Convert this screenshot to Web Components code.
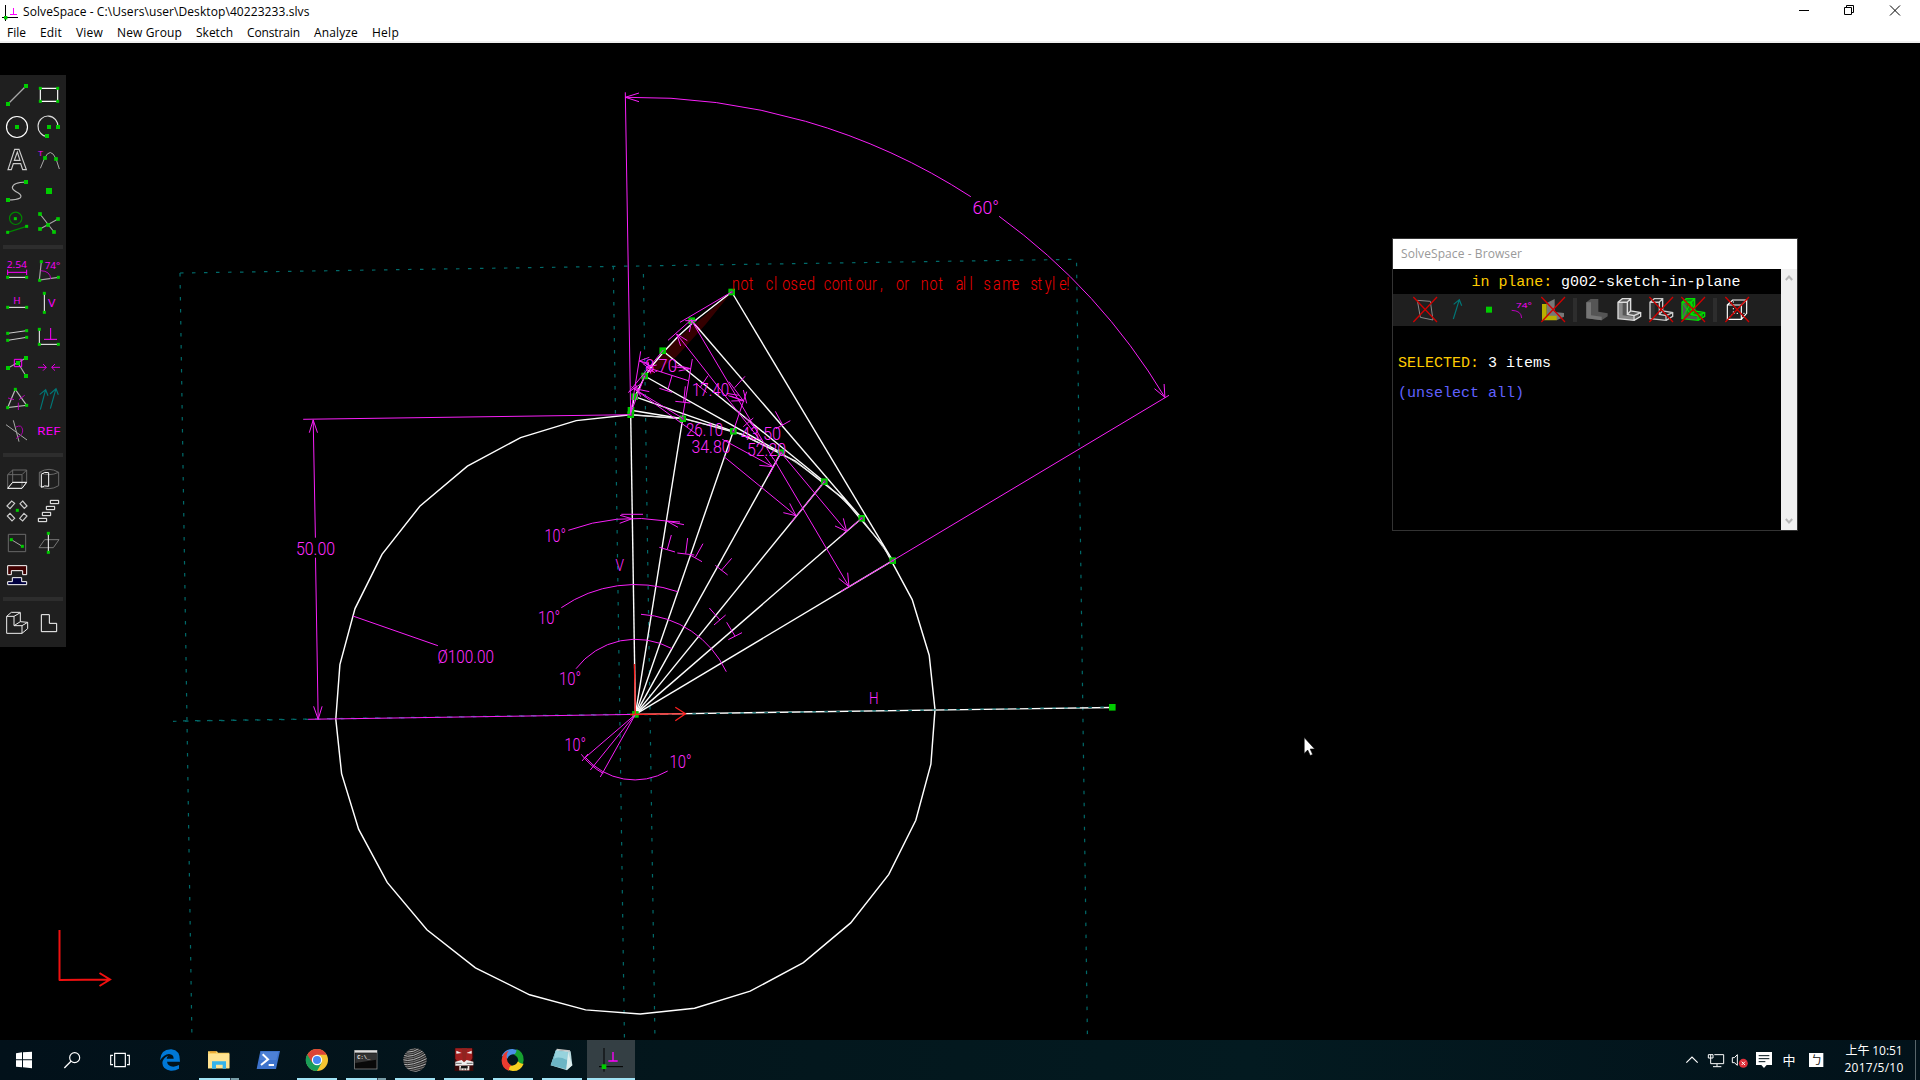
<!DOCTYPE html>
<html lang="zh-Hant">
<head>
<meta charset="utf-8">
<title>SolveSpace</title>
<style>
html,body{margin:0;height:100%;background:#000;overflow:hidden}
body{font-family:"Open Sans","Noto Sans CJK TC",sans-serif}
</style>
</head>
<body>
<solve-app></solve-app>
<script>
const define=(name,css,html,after)=>customElements.define(name,class extends HTMLElement{
  connectedCallback(){
    if(this.shadowRoot)return;
    const r=this.attachShadow({mode:'open'});
    r.innerHTML=`<style>${css}</style>${typeof html==='function'?html(this):html}`;
    if(after)after(this,r);
  }
});
const svg=(vb,w,h,body)=>`<svg viewBox="${vb}" width="${w}" height="${h}">${body}</svg>`;
const ln=(d,c='#fff',w=1,x='')=>`<path d="${d}" fill="none" stroke="${c}" stroke-width="${w}" ${x}/>`;

/* Text whose tracking is adjusted to a given width */
define('fit-text',':host{display:block;white-space:pre}span{display:inline-block}','<span><slot></slot></span>',(el,r)=>{
  const w=+el.getAttribute('w'),s=r.querySelector('span');
  if(w){const m=s.getBoundingClientRect().width,n=el.textContent.length;
    s.style.letterSpacing=((w-m)/n)+'px';}
});

/* ---------- title and menu bars ---------- */
define('title-bar',`:host{display:flex;align-items:center;height:23px;background:#fff;color:#000;font-size:12px;line-height:16px;padding-right:4px}
.logo{margin:2px 5px 0 2px;display:block}fit-text{flex:1;margin-top:1px}
.b{display:flex;align-items:flex-start;height:23px}.b svg{display:block;width:46px;height:21px}`,
`<svg class="logo" width="16" height="17" viewBox="0 0 16 17"><path d="M3.5 1v16M0 13.5h16" stroke="#000" fill="none"/><path d="M8 10.5h7M11.5 4v6" stroke="#f0f" fill="none"/><rect x="2" y="12" width="3.4" height="3.4" fill="#0c0"/></svg>
<fit-text w="286.5">SolveSpace - C:\\Users\\user\\Desktop\\40223233.slvs</fit-text>
<div class="b">
<svg viewBox="0 0 46 21"><path d="M21 10.5h10" stroke="#000"/></svg>
<svg viewBox="0 0 46 21"><path d="M20.500 7.500h7v7h-7zM22.500 7.500v-2h7v7h-2" stroke="#000" fill="none"/></svg>
<svg viewBox="0 0 46 21"><path d="M20 5.500l10 10M30 5.500l-10 10" stroke="#000"/></svg></div>`);
define('menu-bar',`:host{display:flex;height:18px;padding-left:7px;background:#fff;color:#000;font-size:12px;line-height:20px;border-bottom:2px solid #f0f0f0}
fit-text{box-sizing:border-box;flex:none;height:18px}`,
()=>[['File',19,33],['Edit',22,36],['View',27,41],['New Group',65,79],['Sketch',37,51],['Constrain',53,67],['Analyze',44,58],['Help',27,41]]
.map(([t,w,c])=>`<fit-text w="${w}" style="width:${c}px">${t}</fit-text>`).join(''));

/* ---------- tool palette ---------- */
const G='#00cc00',M='#ff00ff',W='#fff',A='#a8a8a8',D='#696969';
const sq=(x,y,s=11)=>`<rect x="${x-s/2}" y="${y-s/2}" width="${s}" height="${s}" fill="${G}"/>`;
const ic=(x,y,b)=>svg(`${x} ${y} 96 96`,32,32,b);
const tx=(s,x,y,f,w,c=M)=>`<text x="${x}" y="${y}" font-size="${f}" textLength="${w}" lengthAdjust="spacingAndGlyphs" fill="${c}">${s}</text>`;
const palette=[
[ic(3,27,ln('M24 102L78 48',A,3.500)+sq(24,102,12)+sq(78,48,12)),
 ic(99,27,ln('M121 55H173V94H121Z',W,3.500)+sq(121,55,9)+sq(173,55,9)+sq(121,94,9)+sq(173,94,9)),
 ic(3,123,`<circle cx="51" cy="171" r="31.500" fill="none" stroke="#fff" stroke-width="3.500"/>`+sq(51,171,12)),
 ic(99,123,ln('M174 171A30 31 0 1 0 142 200','#ddd',3.500)+sq(147,171,12)+sq(174,171,12)+sq(141,198,12)),
 ic(3,219,ln('M24 299L44 238H57L79 299H68L62 281H40L34 299ZM43 271H60L52 246Z','#ccc',3.500)),
 ic(99,219,ln('M121 295L134 264Q151 230 168 266L178 297',A,3)+sq(135,264)+sq(168,267)+tx('T',114,258,23,15)),
 ic(3,315,ln('M78 336Q38 337 37 353Q38 361 54 368Q68 377 60 384Q50 390 24 390','#bbb',3.500)+sq(78,336,12)+sq(24,390,12)),
 ic(99,315,sq(147,363,18)),
 ic(3,411,`<circle cx="47" cy="445" r="18.500" fill="none" stroke="#008600" stroke-width="3.500"/>`+ln('M23 487L80 469','#008600',3.500)+sq(46,446,9)+sq(23,487,9)+sq(80,469,9)),
 ic(99,411,ln('M120 432L162 486M120 477L174 447',A,3.500)+sq(120,432)+sq(162,486)+sq(120,477)+sq(174,447)+sq(144,465))],
[ic(3,555,tx('2.54',20,593,28,61)+ln('M23 607H80M23 599V615M80 599V615',M,3)+ln('M23 622H80',W,3)+sq(23,622,9)+sq(80,622,9)),
 ic(99,555,ln('M124 575L118 630L175 622',A,3.500)+ln('M122 602Q151 603 152 627','#b0b',3)+sq(124,575,9)+sq(119,631,9)+sq(175,622,9)+tx('74°',134,597,28,47)),
 ic(3,651,tx('H',40,701,27,22)+ln('M23 712H80',W,3)+sq(23,712,9)+sq(80,712,9)),
 ic(99,651,tx('V',144,710,31,22)+ln('M133 670V727',W,3)+sq(133,670,9)+sq(133,727,9)),
 ic(3,747,ln('M23 790L80 782M23 811L80 802','#ccc',3)+sq(23,790,9)+sq(80,782,9)+sq(23,811,9)+sq(80,802,9)),
 ic(99,747,ln('M118 778V823H175',W,3)+ln('M132 808H171M152 774V808',M,3)+sq(118,778,9)+sq(118,823,9)+sq(175,823,9)),
 ic(3,3,ln('M24 54L78 24M54 39L78 78',A,3.500)+sq(24,54,12)+sq(78,24,12)+sq(78,78,12)+sq(54,39,12)+ln('M43 28H65V50H43Z',M,3)),
 ic(99,3,ln('M114 52H139M129 42L139 52L129 62M180 52H155M165 42L155 52L165 62','#d0d',3)),
 ic(3,99,ln('M46 118L23 173L80 166Z','#bbb',3.500)+ln('M24 144L42 149M57 149L74 136M55 158V180','#b0b',3)+sq(46,118,9)+sq(23,173,9)+sq(80,166,9)),
 ic(99,99,ln('M121 179L137 119M119 134L137 119L144 137M151 176L168 116M150 132L168 116L175 134','#077',3.500)),
 ic(3,195,ln('M18 224L81 270M40 211L57 275',A,3)+ln('M48 231Q66 222 68 240Q69 254 54 261L48 266','#a0a',3)),
 ic(99,195,tx('REF',111,255,31,70))],
[ic(3,339,ln('M23 374H66V415H23ZM23 374L38 360H80V397L66 415M66 374L80 360M38 360V397L23 415M38 397H80',D,3)+ln('M23 415L38 397H80L66 415Z',W,3)),
 ic(99,339,ln('M118 367Q147 349 176 367V407Q147 425 118 407ZM118 367Q147 381 176 367',D,3)+ln('M124 373Q133 364 146 368V409Q133 405 124 412Z',W,3)),
 ic(3,435,ln('M21 468L35 453L44 460L30 476ZM68 453L81 468L73 475L60 461ZM30 490L44 505L36 513L22 498ZM72 490L81 498L68 513L59 505Z','#ccc',3.500)+sq(52,481,9)),
 ic(99,435,ln('M151 451H176V461H151ZM139 469H164V479H139ZM127 487H152V497H127ZM115 505H140V515H115Z',W,3)),
 ic(3,531,ln('M25 553H77V605H25Z',D,3)+ln('M34 569L67 589',A,3)+sq(34,569,9)+sq(67,589,9)),
 ic(99,531,ln('M117 593L134 569H177L160 593Z','#777',3)+ln('M145 550V607',W,3)+sq(145,550,9)+sq(145,607,9)),
 ic(3,627,`<path d="M23 647H80V674H68V662H34V674H23Z" fill="#400000" stroke="#fff" stroke-width="3"/><path d="M37 683H65V695H80V704H23V695H37Z" fill="#000040" stroke="#fff" stroke-width="3"/>`)],
[ic(3,771,ln('M20 799H42V827H66V850H20ZM42 799L61 788V815L83 817V836L66 850M20 799L34 787H61M42 827L61 815M66 827L83 817','#eee',3)),
 ic(99,771,ln('M124 794H148V820H170V845H124Z',W,3))]];
define('tool-palette',`:host{display:block;box-sizing:border-box;width:66px;height:572px;padding:4px 1px;background:#1f1f1f;font-family:"Open Sans",sans-serif;font-weight:400}
.g{display:grid;grid-template-columns:32px 32px;grid-auto-rows:32px}svg{display:block}
hr{margin:6px 2px;height:4px;border:0;background:#2d2d2d}`,
()=>palette.map(g=>`<div class="g">${g.join('')}</div>`).join('<hr>'));

/* ---------- sketch view ---------- */
function sketch(){
  const C=[635.4,714.4],P=(u,v)=>[C[0]+299.65*u-4.8*v,C[1]-4.8*u-299.65*v];
  const f=a=>a.map(n=>n.toFixed(1)).join(' ');
  let pts=[];
  for(let q=0;q<4;q++)for(let i=0;i<8;i++){
    const t=i/8,a=(1-t)**2,b=2*t*(1-t)*Math.SQRT1_2,c=t*t,w=a+b+c;
    const x=(a+b)/w,y=(b+c)/w;
    pts.push(P(...[[x,y],[-y,x],[-x,-y],[y,-x]][q]));
  }
  const K='#f820f8',wt='#fff';
  const circle=`<polygon points="${pts.map(f).join(' ')}" fill="none" stroke="${wt}" stroke-width="1.45"/>`;
  const Ps=[[630.7,414.7],[682.7,418.7],[733.3,431.3],[781,452.7],[824.3,481.7],[861.7,518.3],[892.7,560.7]];
  const Qs=[[631,410.3],[634.7,396.7],[644.7,376],[662.7,350.7],[691.7,320.7],[731.7,292]];
  let s='';
  const L=(d,c=K,w=1)=>{s+=ln(d,c,w)};
  // workplane outlines
  const dash=(d,o=0)=>{s+=ln(d,'#006a6a',1.200,`stroke-dasharray="3.500 8.500" stroke-dashoffset="${o}"`)};
  dash('M180 273L1076.500 259.300L1087.500 1042');dash('M180 273L192 1042');dash('M613.300 266L624.500 1042');dash('M643.300 266L655 1042',4);dash('M173 721.300L635 714.400',0);dash('M176 721L635 714',5);
  s+='<path d="M731.700 292L706 324L676 357L651 375L647 371L664 350L696 323Z" fill="#340000"/>';
  s+=circle;
  L(`M${f(C)}L1112 707.500`,wt,1.400);dash('M635.400 714.900L1112 707',3);
  Ps.forEach(p=>L(`M${f(C)}L${f(p)}`,wt,1.400));
  Qs.forEach((q,i)=>L(`M${f(q)}L${f(Ps[i+1])}`,wt,1.400));
  L('M630.700 414.700L634 398.500L644 378L652 366L663.500 352L679 335.500L697 319L731.700 292',wt,1.400);
  L('M'+Ps.map(f).join('L'),'#ddd',.8);
  // points
  [...Ps,...Qs,C].forEach(([x,y])=>s+=`<rect x="${x-3.3}" y="${y-3.3}" width="6.600" height="6.600" fill="#00cc00"/>`);
  s+='<rect x="1109" y="704" width="6.600" height="6.600" fill="#00cc00"/>';
  [...Ps,Qs[5],Qs[2]].forEach(([x,y])=>s+=`<circle cx="${x}" cy="${y}" r="1.600" fill="#7b2a7b"/>`);
  // 60 degree dimension
  L('M625.300 92.300L630.700 414.700M639 93L625.300 97.300L639 101.700M625.300 97.300A617.200 617.200 0 0 1 970.800 196.700M999.100 216.300A617.200 617.200 0 0 1 1164.900 397.300M1164.100 384L1164.900 397.300L1154.500 388.700M840.700 591.700L1169 395.300');
  // height dimension
  L('M303.200 419.300L630.700 414.700M308.200 719.300L635 714.400M313.200 419.700L315.400 537.700M315.500 557.700L318.200 719.300M309.300 432.700L313.200 420L317.500 432.700M313.600 706.300L318.200 719.300L322.100 706.300M352.900 616L437.900 645.700');
  // 10 degree dimensions
  L('M568.300 530.300A196 196 0 0 1 666.700 521M632 518.700L620 515.300M632 518.700L619.700 523.300M621.300 514.300H643M678 527.300L666.700 521L680 522M666.700 521L684 524.700');
  L('M561.300 607.700A129.600 129.600 0 0 1 677.700 591.700M576 668.700A75 75 0 0 1 672 648.700M641 614.300A100.200 100.200 0 0 1 726.300 671.700');
  L('M635.400 714.400L585 757.700M635.400 714.400L590.300 770M635.400 714.400L600.300 777M581.300 754.300Q590 766 603.300 773.500M585 757A65.400 65.400 0 0 0 667.700 771M582 761L588 754');
  // perpendicular marks on the spokes
  const g=(o,d)=>{s+=`<g transform="translate(600 ${o}) scale(.33333)">${ln(d,K,1,'vector-effect="non-scaling-stroke"')}</g>`};
  g(380,'M178 502L225 516M214 465L202 508M232 519L283 525M263 474L257 521M272 526L306 545M309 491L286 532M346 556L383 585M395 535L364 571M342 735L377 705M328 684L360 720M385 779L426 758M380 727L405 768M543 218L505 290M673 305L573 428M785 415L720 470M372 230L588 407M550 398L588 407L569 370M543 218L740 454M705 438L740 454L730 415M520 235L747 620M716 595L747 620L743 578');
  g(250,'M178 415L216 427M216 377L203 421M226 454L271 459M256 409L251 456M288 400L320 428M324 377L300 413M387 395L432 455M435 379L404 413M526 484L548 525M528 536L571 512M435 500L465 535M460 504L430 530');
  g(250,'M122 304L93 485M277 327L248 500M118 333L145 340M148 322L118 333L148 346M215 350L272 356M232 346L272 356L236 363M140 352L265 392M170 345L140 352L165 368M128 340L160 365M144 335L152 370M385 437L430 452M392 438L430 452L394 453M440 425L400 543M85 428L190 300M92 490L134 378M88 425L125 400M94 410L300 560M100 415L248 505M100 415L148 425M106 402L122 440M367 568L518 650M478 646L518 650L495 620M240 217L395 126M204 271L275 208M230 252L480 570M230 252L262 272M230 252L242 288M275 212L520 627M275 212L268 246M275 212L298 236M256 212L290 212M380 430L416 436M430 420L440 460');
  // coordinate axes
  L('M635.400 714.400L634.400 664M630 714.500L685.300 713.700M675.300 707.300L685.500 713.700L675.300 720.700','#ff2020',1.300);
  L('M59.500 930V980.500M59 980L110 979.500M99.500 973L110 979.500L99.500 986','#f01010',2);
  const T=(t,a,b,base,c='#ff2cff',fs=17.5)=>{s+=`<text x="${a}" y="${base}" font-size="${fs}" textLength="${b-a}" lengthAdjust="spacingAndGlyphs" fill="${c}">${t}</text>`};
  T('60°',972.500,999,214);T('50.00',296,335,555);T('Ø100.00',437.500,494,663);
  T('10°',544.500,566,542);T('10°',538,560,624.300);T('10°',559,581,685);T('10°',564.500,586,751);T('10°',669.500,691.500,768.300);
  T('V',615.500,624,571,undefined,16);T('H',869,878.500,703.500,undefined,16);
  T('8.70',645,677,371.700);T('17.40',692,729,396);T('26.10',686,723,436);T('34.80',691.500,730.500,453);T('43.50',741,781,439.500);T('52.20',747,786,456);
  // stroke-font lettering: narrow glyphs set with wide tracking
  const words=[['not ',732,765.700],['closed ',765.700,823.700],['contour, ',823.700,896],['or ',896,920.700],['not ',920.700,955.700],['all ',955.700,983.500],['same ',983.500,1030.500],['style!',1030.500,1073.500]];
  s+=`<text y="290.500" transform="scale(.82 1)" font-size="17.500" fill="#f00000" font-weight="300" xml:space="preserve">`+
    words.map(([w,a,b])=>{let n=w.length,r='';for(let i=0;i<n;i++)r+=((a+(b-a)*i/n)/.82).toFixed(1)+' ';return `<tspan x="${r.trim()}">${w}</tspan>`}).join('')+'</text>';
  // pointer
  s+='<path d="M1304.200 737.500V753.500L1307.700 750L1310.200 755.500L1312.700 754.500L1310.200 749H1314.700Z" fill="#fff" stroke="#000" stroke-width=".6"/>';
  return s;
}
define('sketch-view',':host{display:block;background:#000;font-family:"Roboto",sans-serif;font-weight:300}svg{display:block}',()=>svg('0 43 1920 997',1920,997,sketch()));

/* ---------- property browser window ---------- */
const X=(x)=>ln(`M${x-35} 187L${x+36} 262M${x+36} 187L${x-35} 262`,'#d00000',4);
const solid=(x,a,b,c)=>`<path d="M${x} 203L${x+13} 193H${x+36}V231L${x+64} 236V245L${x+46} 257L${x} 251Z" fill="${a}"/><path d="M${x+14} 203V242L${x+46} 246V257L${x} 251V203Z" fill="${b}"/>${c?ln(`M${x} 203L${x+28} 202V239L${x+48} 243V257L${x} 252ZM${x} 203L${x+13} 192H${x+38}V229L${x+68} 234V245L${x+48} 257M${x+28} 202L${x+38} 192M${x+28} 239L${x+38} 229M${x+48} 243L${x+68} 234`,c,4):''}`;
const bi=(x,b)=>svg(`${x-48} 178 96 96`,32,32,b);
const row1=[
 bi(105,ln('M82 197L121 200L129 256L91 248Z','#888',3)+X(105)),
 bi(201,ln('M190 253L208 195M191 209L208 195L215 213','#077',3.500)),
 bi(297,sq(297,225,18)),
 bi(393,tx('74°',378,220,24,47)+ln('M365 227Q394 228 395 250','#b0b',3)),
 bi(489,`<path d="M470 205L494 193V232L522 235V246L500 257L470 245Z" fill="#777"/><path d="M456 208H470V243H500V257H456Z" fill="#b8b000"/>`+X(489))];
const row2=[bi(620,solid(588,'#555','#757575')),bi(716,solid(683,'#555','#888','#ddd')),bi(812,solid(779,'#222','#333','#ccc')+X(812)),
 bi(908,solid(875,'#118a11','#555','#0d0')+ln('M876 251L902 203L916 230M877 205L902 240L936 244','#0d0',3)+X(908))];
const row3=bi(1041,ln('M1012 211H1054V254H1012ZM1012 211L1028 196H1070V236L1054 254M1054 211L1070 196',W,3.500)+ln('M1030 200V236L1014 252M1030 236H1068',W,3,'stroke-dasharray="4 6"')+X(1041));
define('property-browser',`:host{display:flex;flex-direction:column;box-sizing:border-box;width:406px;height:293px;border:1px solid #333;background:#000}
header{height:30px;background:#fff;color:#999;font-size:12px;line-height:30px;padding-left:8px}
.m{display:flex;flex:1}.c{width:388px;font:15px/30px "Liberation Mono",monospace;color:#fff;white-space:pre}
.r{box-sizing:border-box;height:25px;line-height:28px;padding-left:78.5px;letter-spacing:-.04px}.y{color:#fc0}.l{color:#6060ff}
.t{display:flex;height:32px;background:#1f1f1f;padding-left:16px;font-family:"Open Sans",sans-serif}.t svg{display:block;flex:none}
i{display:block;width:4px;height:24px;margin:4px}.t i{background:#2d2d2d}
.p{padding-left:5px;height:30px}.s{flex:1;display:flex;flex-direction:column;justify-content:space-between;align-items:center;background:#f0f0f0;padding:6px 0}`,
`<header><fit-text w="121">SolveSpace - Browser</fit-text></header><div class="m"><div class="c"><div class="r"><span class="y">in plane:</span> g002-sketch-in-plane</div><div class="t">${row1.join('')}<i></i>${row2.join('')}<i></i>${row3}</div><div class="p" style="padding-top:23px"><span class="y">SELECTED:</span> 3 items</div><div class="p l">(unselect all)</div></div><div class="s">${svg('0 0 8 6',8,6,ln('M.8 5L4 1.500L7.200 5','#b8b8b8',2))}${svg('0 0 8 6',8,6,ln('M.8 1L4 4.500L7.200 1','#b8b8b8',2))}</div></div>`);

/* ---------- task bar ---------- */
const ti=(cx,b,o={})=>`<div class="k ${o.on?'on':''} ${o.multi?'multi':''} ${o.act?'act':''}" style="width:${o.w||49}px">${svg(`${cx-72} 6 144 120`,48,40,b)}</div>`;
const icons=()=>{
 const start=ti(72,'<path d="M48 46L66 43V64H48ZM69 43L96 41V64H69ZM48 67H66V88L48 86ZM69 67H96V91L69 88Z" fill="#fff"/>',{w:48});
 const find=ti(216,'<circle cx="224" cy="59" r="15" fill="none" stroke="#fff" stroke-width="3.500"/>'+ln('M213 70L193 90',W,4),{w:48});
 const task=ti(360,ln('M344 46H376V86H344ZM339 52H332V80H339M381 52H388V80H381',W,3.500),{w:50});
 const edge=ti(510,'<path d="M480 67Q482 33 514 34Q541 36 540 71H501Q503 85 520 86Q530 85 537 81V92Q525 99 512 98Q488 95 487 75Q488 60 505 53Q500 57 500 62H521Q521 49 507 48Q492 49 480 67Z" fill="#0078d7"/>');
 const files=ti(657,'<path d="M624 40H651L654 44H688V91H624Z" fill="#f9d36a"/><path d="M624 48H688V91H624Z" fill="#ffe391"/><path d="M636 70H678V92H668V80H648V92H636Z" fill="#35b3ea"/><path d="M630 40H648V44H630Z" fill="#e89a20"/>',{on:1,multi:1});
 const ps=ti(804,'<path d="M781 39H840L828 93H770Z" fill="#3d73cc"/><path d="M784 42H835L829 66H779Z" fill="#5d8fe0" opacity=".5"/>'+ln('M788 49L804 64L783 81M806 81H822',W,6));
 const chrome=ti(951,'<circle cx="951" cy="66" r="33" fill="#f5c431"/><path d="M951 66L922 49A33 33 0 0 0 951 99L965 74Z" fill="#1a9d58"/><path d="M922 50A33 33 0 0 1 980 50H951L937 74Z" fill="#dc4437"/><circle cx="951" cy="66" r="15.500" fill="#fff"/><circle cx="951" cy="66" r="12" fill="#4687f2"/>',{on:1});
 const cmd=ti(76,'<rect x="42" y="37" width="67" height="56" fill="#090909" stroke="#999" stroke-width="2"/><path d="M42 37H109V44H42Z" fill="#ddd"/><path d="M44 46H107V65L44 75Z" fill="#333"/><text x="50" y="62" font-size="16" font-family="Liberation Mono" font-weight="700" fill="#eee">C:\\_</text>',{on:1,multi:1});
 let st='';for(let i=0;i<13;i++)st+=ln(`M188 ${30+i*7}Q${215} ${72+i*5-22} 264 ${4+i*8}`,i%2?'#ccc':'#8a8a8a',2.600);
 const ball=ti(225,`<clipPath id="b"><circle cx="225" cy="66" r="35"/></clipPath><g clip-path="url(#b)"><rect x="188" y="30" width="74" height="74" fill="#2c2c2c"/>${st}</g>`,{on:1});
 const mask=ti(373,'<path d="M345 31H401V99H345Z" fill="#3a0808"/><path d="M347 31H397L398 60L389 77H358L347 62Z" fill="#a32020"/><path d="M350 38L366 45L350 47ZM396 38L380 45L396 47Z" fill="#eee"/><path d="M366 31H382L378 73H370Z" fill="#8e2420"/><path d="M347 71L366 66L373 73L381 66L401 71V82L347 83Z" fill="#eee"/><path d="M359 84H389V97H359Z" fill="#f0e6e0"/><path d="M364 84H384V91H364Z" fill="#111"/>'+ln('M348 76H366M381 76H399M364 97V88M373 97V91M381 97V88','#222',2),{on:1});
 let pin='';['#4b90e8','#16a030','#f4ce20','#ea3c30'].forEach((c,i)=>pin+=`<path transform="rotate(${i*90} 519 66)" d="M486 55Q495 32 519 33Q541 35 547 54Q537 45 523 49Q510 48 503 62Q497 53 486 55Z" fill="${c}"/>`);
 const sx=ti(520,`<circle cx="519" cy="66" r="24" fill="none" stroke="#ea3c30" stroke-width="12" stroke-dasharray="37.700 113.100" stroke-dashoffset="-70"/><circle cx="519" cy="66" r="24" fill="none" stroke="#f4ce20" stroke-width="12" stroke-dasharray="37.700 113.100" stroke-dashoffset="-32"/><circle cx="519" cy="66" r="24" fill="none" stroke="#16a030" stroke-width="12" stroke-dasharray="37.700 113.100" stroke-dashoffset="5.700"/><circle cx="519" cy="66" r="24" fill="none" stroke="#4b90e8" stroke-width="12" stroke-dasharray="37.700 113.100" stroke-dashoffset="43"/>`+pin,{on:1});
 const note=ti(666,'<path d="M648 35L692 40L697 82L681 97L632 82Z" fill="#b9dbe0"/><path d="M647 38L684 43L679 94L632 82Z" fill="#6cb5c4"/><path d="M647 38L684 43L680 66Q658 54 642 62Z" fill="#97d3dd"/><path d="M684 43L697 82L679 96Z" fill="#ddeeee"/>'+ln('M650 34L690 39','#c7c7c7',4),{on:1});
 const solve=ti(813,ln('M792 30V101M777 86H849','#000',3)+ln('M805 69H833M819 42V69',M,4)+sq(792,86,14),{act:1,w:48});
 return [start,find,task,edge,files,ps,chrome,cmd,ball,mask,sx,note,solve].join('');
};
const tr=(x,w,b)=>svg(`${x} 6 ${w*3} 120`,w,40,b);
define('task-bar',`:host{display:flex;height:40px;background:linear-gradient(90deg,#02111a,#03161c 35%,#031a20 65%,#02121a);color:#fff}
.k{position:relative;display:flex;justify-content:flex-start;height:40px;box-sizing:border-box}.k svg,.tray svg{display:block;flex:none}
.on::after,.act::after{content:"";position:absolute;bottom:0;left:4px;width:40px;height:2px;background:#a1e3f5}
.multi::after{background:linear-gradient(90deg,#a1e3f5 31px,#345 31px,#345 32px,#789da7 32px)}
.act{background:#343f44}.act::after{left:0;width:48px}.sp{flex:1}.tray{display:flex}
.clock{width:78px;font:12px/16px "Open Sans","Noto Sans CJK TC",sans-serif;text-align:center;padding:3px 0 0;display:flex;flex-direction:column;align-items:center}
.clock fit-text{height:17px}
.e{width:4px;border-left:1px solid #59666b;margin-left:2px}.z{font:13px/40px "Noto Sans CJK TC",sans-serif;width:22px;text-align:center;height:40px;overflow:hidden}`,
()=>icons()+`<div class="sp"></div><div class="tray">
${tr(72,22,ln('M79 74L96 57L113 74',W,3.500))}
${tr(138,24,ln('M152 60V77H191V50H163M145 50H159V60H145ZM171 78V85M159 86H184M152 60V50',W,3))}
${tr(210,24,ln('M217 59H223L232 50V82L223 74H217Z',W,3)+'<circle cx="250" cy="76" r="13.500" fill="#e0303a"/>'+ln('M245 71L255 81M255 71L245 81',W,3))}
${tr(282,24,'<path d="M288 42H336V81H320L312 90L304 81H288Z" fill="#fff"/>'+ln('M296 53H328M296 62H328M296 71H316','#03161c',3))}
<div class="z" style="margin-right:4px">中</div>
${tr(432,26,'<rect x="447" y="45" width="43" height="42" fill="#fff"/><text x="453" y="79" font-size="34" font-family="Noto Sans CJK TC" fill="#111">ㄅ</text>')}
</div><div class="clock" style="margin-left:5px"><fit-text w="57">上午 10:51</fit-text><fit-text w="59">2017/5/10</fit-text></div><div class="e"></div>`);

/* ---------- application shell ---------- */
define('solve-app',`:host{display:flex;flex-direction:column;width:1920px;height:1080px;background:#000;overflow:hidden}
main{position:relative;flex:1;min-height:0}
tool-palette{position:absolute;left:0;top:32px}property-browser{position:absolute;left:1392px;top:195px}`,
`<title-bar></title-bar><menu-bar></menu-bar><main><sketch-view></sketch-view><tool-palette></tool-palette><property-browser></property-browser></main><task-bar></task-bar>`);
</script>
</body>
</html>
